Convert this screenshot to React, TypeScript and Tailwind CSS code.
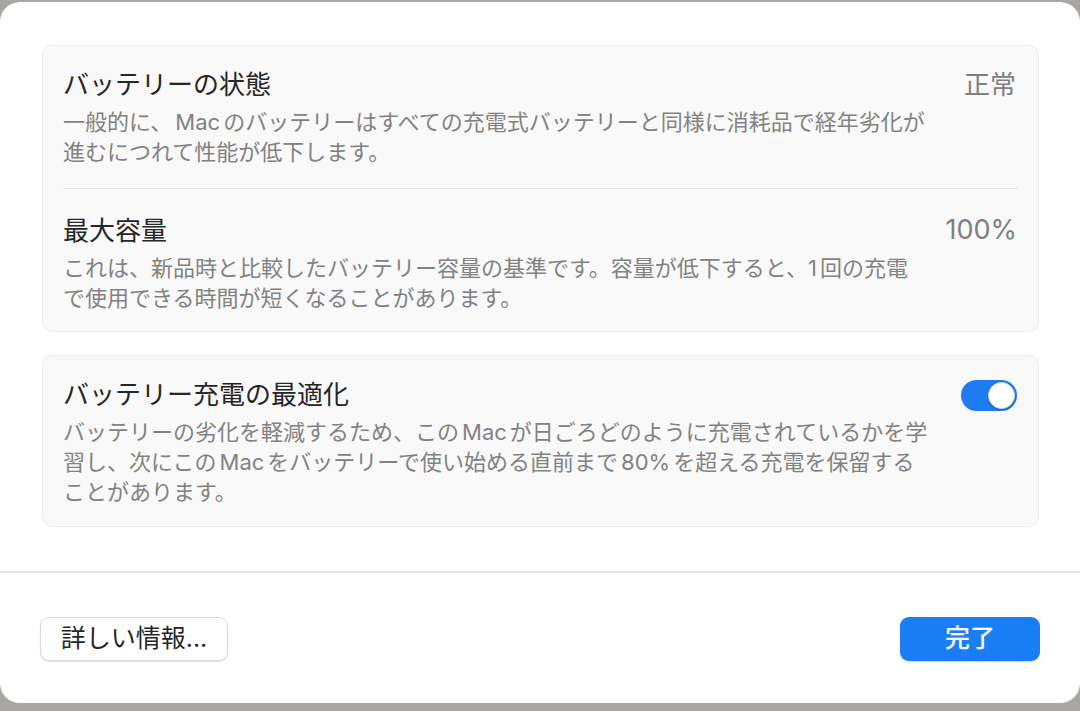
import React from "react";

const font = { fontFamily: 'Inter, "Noto Sans CJK JP", "Noto Sans", sans-serif' };

function L({ children }: { children: React.ReactNode }) {
  return <span className="mx-[3px]">{children}</span>;
}

function Toggle() {
  return (
    <div className="relative h-[31px] w-[56px] rounded-full bg-[#1f7cf4]">
      <div className="absolute right-[2px] top-[2px] h-[27px] w-[27px] rounded-full border border-[#d6dde8] bg-white shadow-[0_1px_2px_rgba(0,0,0,0.25)]" />
    </div>
  );
}

export default function App() {
  return (
    <div
      className="h-[711px] w-[1080px] overflow-hidden bg-[#a8a7a3] pt-[2px]"
      style={font}
    >
      <div className="flex h-[701px] w-[1080px] flex-col rounded-[20px] bg-white">
        <div className="flex flex-col gap-[23px] px-[42px] pt-[43px]">
          {/* Card 1 */}
          <div className="w-[997px] rounded-[10px] border border-[#ededed] bg-[#f9f9f9] px-[20px] pb-[18px] pt-[23px]">
            <div className="flex items-start justify-between">
              <div className="flex flex-col gap-[6px]">
                <div className="text-[26px] leading-[32px] text-[#262626]">バッテリーの状態</div>
                <div className="whitespace-nowrap text-[22px] leading-[30px] text-[#828282]">
                  一般的に、<L>Mac</L>のバッテリーはすべての充電式バッテリーと同様に消耗品で経年劣化が
                  <br />
                  進むにつれて性能が低下します。
                </div>
              </div>
              <div className="pr-[2px] text-[26px] leading-[32px] text-[#7f7f7f]">正常</div>
            </div>
            <div className="mb-[26px] mt-[21px] h-px w-full bg-[#e4e4e4]" />
            <div className="flex items-start justify-between">
              <div className="flex flex-col gap-[6px]">
                <div className="text-[26px] leading-[32px] text-[#262626]">最大容量</div>
                <div className="whitespace-nowrap text-[22px] leading-[30px] text-[#828282]">
                  これは、新品時と比較したバッテリー容量の基準です。容量が低下すると、<span className="mr-[3px]">1</span>回の充電
                  <br />
                  で使用できる時間が短くなることがあります。
                </div>
              </div>
              <div className="-mt-[1px] pr-[1px] text-[27px] leading-[32px] text-[#7f7f7f]">100%</div>
            </div>
          </div>

          {/* Card 2 */}
          <div className="w-[997px] rounded-[10px] border border-[#ededed] bg-[#f9f9f9] px-[20px] pb-[19px] pt-[23px]">
            <div className="flex items-start justify-between">
              <div className="flex flex-col gap-[6px]">
                <div className="text-[26px] leading-[32px] text-[#262626]">バッテリー充電の最適化</div>
                <div className="whitespace-nowrap text-[22px] leading-[30px] text-[#828282]">
                  バッテリーの劣化を軽減するため、この<L>Mac</L>が日ごろどのように充電されているかを学
                  <br />
                  習し、次にこの<L>Mac</L>をバッテリーで使い始める直前まで<L>80%</L>を超える充電を保留する
                  <br />
                  ことがあります。
                </div>
              </div>
              <div className="pr-[1px] pt-[1px]">
                <Toggle />
              </div>
            </div>
          </div>
        </div>

        <div className="mt-[44px] h-[2px] w-full bg-[#e3e3e3]" />

        <div className="flex items-center justify-between px-[40px] pt-[44px]">
          <button className="flex h-[44px] w-[188px] items-center justify-center rounded-[9px] border border-[#dadada] bg-white text-[25px] text-[#262626] shadow-[0_1px_1px_rgba(0,0,0,0.12)]">
            詳しい情報...
          </button>
          <button className="flex h-[44px] w-[140px] items-center justify-center rounded-[9px] bg-[#1a7ef6] text-[25px] font-medium text-white shadow-[0_1px_1px_rgba(0,0,0,0.15)]">
            完了
          </button>
        </div>
      </div>
    </div>
  );
}
